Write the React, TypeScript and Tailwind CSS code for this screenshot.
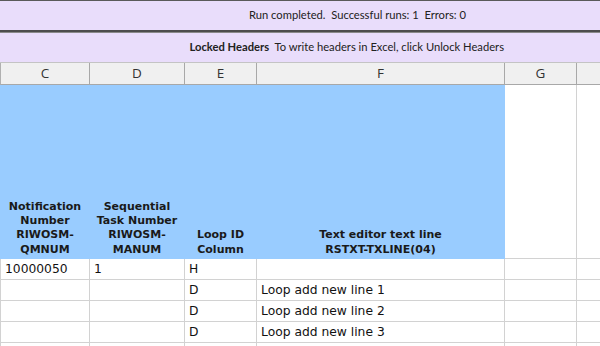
const cols = [
  { key: 'C', w: 'w-[89px]' },
  { key: 'D', w: 'w-[95px]' },
  { key: 'E', w: 'w-[72px]' },
  { key: 'F', w: 'w-[248px]' },
  { key: 'G', w: 'w-[72px]' },
];

const headers = [
  ['Notification', 'Number', 'RIWOSM-', 'QMNUM'],
  ['Sequential', 'Task Number', 'RIWOSM-', 'MANUM'],
  ['Loop ID', 'Column'],
  ['Text editor text line', 'RSTXT-TXLINE(04)'],
];

const rows = [
  ['10000050', '1', 'H', ''],
  ['', '', 'D', 'Loop add new line 1'],
  ['', '', 'D', 'Loop add new line 2'],
  ['', '', 'D', 'Loop add new line 3'],
  ['', '', '', ''],
];

export default function App() {
  return (
    <div className="w-[600px] h-[346px] overflow-hidden bg-white flex flex-col">
      <div className="h-px shrink-0 bg-[#5a5a5a]" />
      <div className="h-[29px] shrink-0 bg-[#e9ddfb] flex items-center justify-end pr-[134px] text-[11.2px] text-[#222] font-['Lato',sans-serif] whitespace-pre">
        Run completed.  Successful runs: 1  Errors: 0
      </div>
      <div className="h-[3px] shrink-0 bg-[#4d4d4d] border-b border-[#8a8a8a]" />
      <div className="h-[29px] shrink-0 bg-[#e9ddfb] flex items-center justify-end pr-[96px] text-[11.2px] text-[#222] font-['Lato',sans-serif] whitespace-pre">
        <span className="font-bold">Locked Headers</span>  To write headers in Excel, click Unlock Headers
      </div>
      <div className="h-px shrink-0 bg-[#c4c4c4]" />

      {/* column letters */}
      <div className="flex h-[22px] shrink-0 bg-[#f0f0f0] border-b border-[#a8a8a8] border-l border-l-[#b0b0b0] font-['Open_Sans',sans-serif] text-[13.5px] text-[#333]">
        {cols.map((c) => (
          <div key={c.key} className={`${c.w} shrink-0 border-r border-[#a8a8a8] flex items-center justify-center`}>
            {c.key}
          </div>
        ))}
        <div className="flex-1" />
      </div>

      {/* blue header row */}
      <div className="flex h-[174px] shrink-0 font-['DejaVu_Sans',sans-serif] border-l border-[#99ccff]">
        {headers.map((lines, i) => (
          <div
            key={i}
            className={`${cols[i].w} shrink-0 bg-[#99ccff] border-r border-b border-[#99ccff] flex flex-col justify-end items-center pb-px text-[11px] leading-[14.3px] font-bold text-[#1a1a1a] text-center`}
          >
            {lines.map((l) => (
              <span key={l} className="whitespace-nowrap">{l}</span>
            ))}
          </div>
        ))}
        <div className="w-[72px] shrink-0 border-r border-b border-[#d2d2d2]" />
        <div className="flex-1 border-b border-[#d2d2d2]" />
      </div>

      {/* data rows */}
      {rows.map((r, ri) => (
        <div key={ri} className="flex h-[21px] shrink-0 font-['DejaVu_Sans',sans-serif] text-[12.3px] text-[#111] border-l border-[#d2d2d2]">
          {r.map((v, ci) => (
            <div key={ci} className={`${cols[ci].w} shrink-0 border-r border-b border-[#d2d2d2] flex items-center pl-[4px] whitespace-nowrap`}>
              {v}
            </div>
          ))}
          <div className="w-[72px] shrink-0 border-r border-b border-[#d2d2d2]" />
          <div className="flex-1 border-b border-[#d2d2d2]" />
        </div>
      ))}
    </div>
  );
}
